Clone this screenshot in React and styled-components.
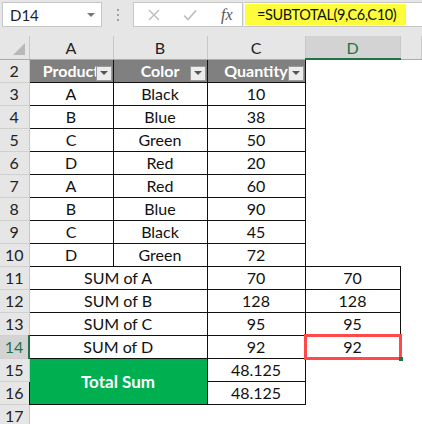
import styled, { createGlobalStyle } from "styled-components"

const GlobalStyle = createGlobalStyle`
    body {
        margin: 0;
        background: #fff;
        font-family: "Lato", "Liberation Sans", sans-serif;
    }
`

const Page = styled.div`
    width: 422px;
    height: 424px;
    overflow: hidden;
    background: #fff;
`

const FormulaBar = styled.div`
    height: 36px;
    background: #e6e6e6;
    display: flex;
    align-items: flex-start;
    padding-top: 2px;
    box-sizing: border-box;
`

const NameBox = styled.div`
    margin-left: 2px;
    width: 100px;
    height: 25px;
    box-sizing: border-box;
    background: #fff;
    border: 1px solid #c6c6c6;
    display: flex;
    align-items: center;
    justify-content: space-between;
    padding: 0 6px 0 7px;
    font-size: 15px;
    color: #222;
`

const Caret = styled.span`
    width: 0;
    height: 0;
    border-left: 4px solid transparent;
    border-right: 4px solid transparent;
    border-top: 4px solid ${props => props.color || "#777"};
`

const Grip = styled.div`
    width: 31px;
    height: 25px;
    display: flex;
    flex-direction: column;
    align-items: center;
    justify-content: center;
    gap: 3px;

    span {
        width: 2px;
        height: 2px;
        background: #a0a0a0;
    }
`

const ButtonsBox = styled.div`
    width: 110px;
    height: 25px;
    box-sizing: border-box;
    background: #fff;
    border: 1px solid #c6c6c6;
    display: flex;
    align-items: center;
    padding-left: 13px;
    gap: 21px;
`

const Fx = styled.span`
    font-family: "Liberation Serif", serif;
    font-style: italic;
    font-size: 16px;
    color: #555;
    margin-left: 2px;
`

const FormulaInput = styled.div`
    flex: 1;
    min-width: 0;
    height: 25px;
    box-sizing: border-box;
    background: #fff;
    border-top: 1px solid #c6c6c6;
    border-bottom: 1px solid #c6c6c6;
    margin-left: 1px;
    padding: 1px 16px 1px 1px;
    display: flex;
`

const Highlight = styled.div`
    flex: 1;
    min-width: 0;
    background: #fdfd3c;
    display: flex;
    align-items: center;
    padding-left: 12px;
    font-size: 14.5px;
    letter-spacing: -0.4px;
    color: #111;
    white-space: nowrap;
`

const Sheet = styled.table`
    border-collapse: collapse;
    table-layout: fixed;
    width: 422px;

    td {
        padding: 0;
        height: 23px;
        box-sizing: border-box;
        text-align: center;
        font-size: 16px;
        color: #111;
        line-height: 20px;
        padding-top: 1px;
        white-space: nowrap;
        overflow: visible;
    }
`

const ColHead = styled.td`
    && {
        background: ${props => (props.$active ? "#d3d3d3" : "#e6e6e6")};
        color: ${props => (props.$active ? "#217346" : "#222")};
        border-right: 1px solid #c8c8c8;
        border-bottom: ${props => (props.$active ? "2px solid #217346" : "1px solid #ababab")};
    }
`

const Corner = styled.td`
    && {
        background: #e6e6e6;
        border-right: 1px solid #c8c8c8;
        border-bottom: 1px solid #ababab;
        position: relative;
    }

    &::after {
        content: "";
        position: absolute;
        right: 4px;
        bottom: 4px;
        width: 0;
        height: 0;
        border-left: 12px solid transparent;
        border-bottom: 12px solid #b8b8b8;
    }
`

const RowHead = styled.td`
    && {
        background: ${props => (props.$active ? "#d3d3d3" : "#e6e6e6")};
        color: ${props => (props.$active ? "#217346" : "#222")};
        border-bottom: 1px solid #d0d0d0;
        border-right: ${props => (props.$active ? "2px solid #217346" : "1px solid #c8c8c8")};
    }
`

const HeadCell = styled.td`
    && {
        background: #808080;
        color: #fff;
        font-weight: 700;
        border: 1px solid #111;
        position: relative;
    }
`

const FilterButton = styled.span`
    position: absolute;
    right: 1px;
    top: 6px;
    width: 16px;
    height: 15px;
    box-sizing: border-box;
    background: #ededed;
    border: 1px solid #9a9a9a;
    display: flex;
    align-items: center;
    justify-content: center;
`

const Cell = styled.td`
    && {
        border: ${props => (props.$bordered ? "1px solid #111" : "none")};
        position: relative;
    }
`

const TotalCell = styled.td`
    && {
        background: #00b050;
        color: #fff;
        font-size: 17px;
        font-weight: 700;
        border: 1px solid #111;
    }
`

const Selection = styled.span`
    position: absolute;
    left: -2px;
    top: -2px;
    right: -2px;
    bottom: -2px;
    border: 3px solid #ff4a4a;
    pointer-events: none;

    &::after {
        content: "";
        position: absolute;
        right: -4px;
        bottom: -4px;
        width: 4px;
        height: 4px;
        background: #217346;
    }
`

const products = [
    ["A", "Black", 10],
    ["B", "Blue", 38],
    ["C", "Green", 50],
    ["D", "Red", 20],
    ["A", "Red", 60],
    ["B", "Blue", 90],
    ["C", "Black", 45],
    ["D", "Green", 72],
]

const sums = [
    ["A", 70],
    ["B", 128],
    ["C", 95],
    ["D", 92],
]

const XIcon = () => (
    <svg width="14" height="14" viewBox="0 0 14 14">
        <path d="M2 2 L12 12 M12 2 L2 12" stroke="#bcbcbc" strokeWidth="1.4" fill="none" />
    </svg>
)

const CheckIcon = () => (
    <svg width="16" height="14" viewBox="0 0 16 14">
        <path d="M2 7.5 L6 11.5 L14 2.5" stroke="#bcbcbc" strokeWidth="1.6" fill="none" />
    </svg>
)

const App = () => {
    return <>
        <GlobalStyle />
        <Page>
            <FormulaBar>
                <NameBox>D14<Caret /></NameBox>
                <Grip><span /><span /><span /></Grip>
                <ButtonsBox>
                    <XIcon />
                    <CheckIcon />
                    <Fx>fx</Fx>
                </ButtonsBox>
                <FormulaInput>
                    <Highlight>=SUBTOTAL(9,C6,C10)</Highlight>
                </FormulaInput>
            </FormulaBar>
            <Sheet>
                <colgroup>
                    <col style={{ width: 29 }} />
                    <col style={{ width: 84 }} />
                    <col style={{ width: 94 }} />
                    <col style={{ width: 98 }} />
                    <col style={{ width: 95 }} />
                    <col />
                </colgroup>
                <tbody>
                    <tr>
                        <Corner />
                        <ColHead>A</ColHead>
                        <ColHead>B</ColHead>
                        <ColHead>C</ColHead>
                        <ColHead $active>D</ColHead>
                        <ColHead />
                    </tr>
                    <tr>
                        <RowHead>2</RowHead>
                        {["Product", "Color", "Quantity"].map(title => (
                            <HeadCell key={title}>
                                {title}
                                <FilterButton><Caret color="#555" /></FilterButton>
                            </HeadCell>
                        ))}
                        <Cell />
                        <Cell />
                    </tr>
                    {products.map((row, i) => (
                        <tr key={i}>
                            <RowHead>{i + 3}</RowHead>
                            <Cell $bordered>{row[0]}</Cell>
                            <Cell $bordered>{row[1]}</Cell>
                            <Cell $bordered>{row[2]}</Cell>
                            <Cell />
                            <Cell />
                        </tr>
                    ))}
                    {sums.map((row, i) => (
                        <tr key={row[0]}>
                            <RowHead $active={i === 3}>{i + 11}</RowHead>
                            <Cell $bordered colSpan={2}>SUM of {row[0]}</Cell>
                            <Cell $bordered>{row[1]}</Cell>
                            <Cell $bordered>
                                {row[1]}
                                {i === 3 && <Selection />}
                            </Cell>
                            <Cell />
                        </tr>
                    ))}
                    <tr>
                        <RowHead>15</RowHead>
                        <TotalCell colSpan={2} rowSpan={2}>Total Sum</TotalCell>
                        <Cell $bordered>48.125</Cell>
                        <Cell />
                        <Cell />
                    </tr>
                    <tr>
                        <RowHead>16</RowHead>
                        <Cell $bordered>48.125</Cell>
                        <Cell />
                        <Cell />
                    </tr>
                    <tr>
                        <RowHead>17</RowHead>
                        <Cell />
                        <Cell />
                        <Cell />
                        <Cell />
                        <Cell />
                    </tr>
                </tbody>
            </Sheet>
        </Page>
    </>
}

export default App
